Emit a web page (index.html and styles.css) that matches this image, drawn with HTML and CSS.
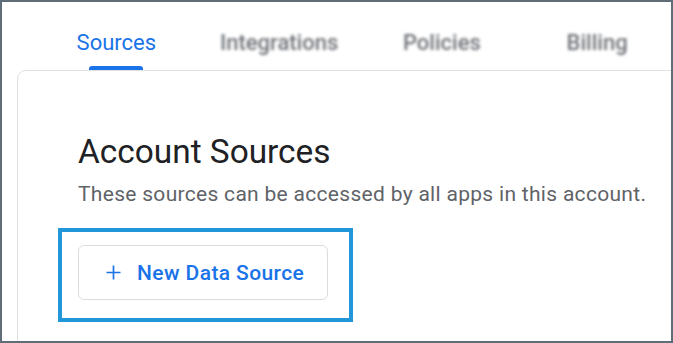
FILE: index.html
```html
<!DOCTYPE html>
<html lang="en">
<head>
<meta charset="utf-8">
<title>Account Sources</title>
<link rel="stylesheet" href="styles.css">
</head>
<body>
<div class="frame">
  <nav class="tabs">
    <div class="tab tab-active">
      <span class="tab-label">Sources</span>
      <span class="tab-indicator"></span>
    </div>
    <div class="tab tab-blurred">
      <span class="tab-label">Integrations</span>
    </div>
    <div class="tab tab-blurred">
      <span class="tab-label">Policies</span>
    </div>
    <div class="tab tab-blurred tab-last">
      <span class="tab-label">Billing</span>
    </div>
  </nav>
  <section class="card">
    <h1 class="title">Account Sources</h1>
    <p class="subtitle">These sources can be accessed by all apps in this account.</p>
    <div class="highlight">
      <button class="new-btn" type="button">
        <svg class="plus" width="15" height="15" viewBox="0 0 15 15" aria-hidden="true">
          <path d="M7.5 0.5v14M0.5 7.5h14" stroke="#1a73e8" stroke-width="1.7" fill="none"/>
        </svg>
        <span>New Data Source</span>
      </button>
    </div>
  </section>
</div>
</body>
</html>
```
FILE: styles.css
```css
* { box-sizing: border-box; }
html, body { margin: 0; padding: 0; }
body {
  background: #ffffff;
  font-family: Roboto, "Liberation Sans", Arial, sans-serif;
}
.frame {
  width: 673px;
  height: 343px;
  border: 2px solid #5f6d79;
  overflow: hidden;
  background: #ffffff;
}
.tabs {
  display: flex;
  padding-left: 33px;
  height: 68px;
}
.tab {
  width: 163px;
  display: flex;
  flex-direction: column;
  align-items: center;
  padding-top: 28px;
}
.tab-last { width: 148px; }
.tab-label {
  font-size: 22px;
  line-height: 26px;
  color: #1a73e8;
  white-space: nowrap;
}
.tab-blurred .tab-label {
  color: #6f7378;
  font-weight: 500;
  filter: blur(1.4px);
}
.tab-indicator {
  display: block;
  width: 54px;
  height: 4px;
  margin-top: 10px;
  background: #1a73e8;
  border-radius: 3px 3px 0 0;
}
.card {
  margin-left: 15px;
  margin-right: -20px;
  height: 320px;
  border: 1px solid #e0e0e0;
  border-radius: 9px 0 0 0;
  padding: 61px 0 0 60px;
}
.title {
  margin: 0;
  font-size: 33.4px;
  line-height: 40px;
  font-weight: 400;
  color: #202124;
}
.subtitle {
  margin: 10px 0 0;
  font-size: 21px;
  line-height: 24px;
  letter-spacing: 0.3px;
  color: #5f6368;
}
.highlight {
  display: inline-block;
  margin: 22px 0 0 -20px;
  border: 4px solid #2196d9;
  padding: 13px 21px 18px 16px;
}
.new-btn {
  display: flex;
  align-items: center;
  width: 250px;
  height: 55px;
  padding: 0 0 0 27px;
  border: 1px solid #dadce0;
  border-radius: 6px;
  background: #ffffff;
  font-family: Roboto, "Liberation Sans", Arial, sans-serif;
  font-size: 21px;
  font-weight: 500;
  letter-spacing: 0.4px;
  color: #1a73e8;
}
.plus { margin-right: 16px; flex: none; }
```
